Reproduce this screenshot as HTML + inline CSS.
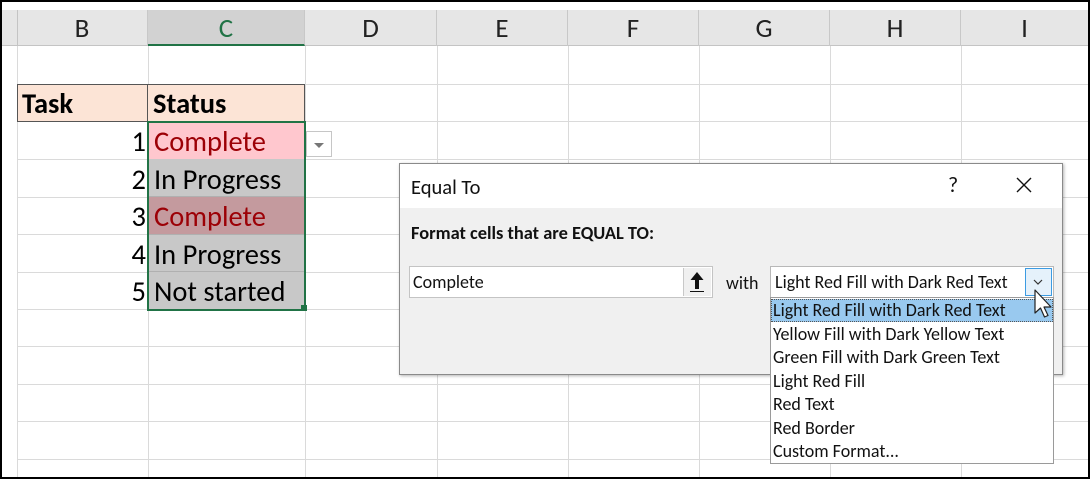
<!DOCTYPE html>
<html><head><meta charset="utf-8"><style>
*{margin:0;padding:0;box-sizing:border-box}
body{width:1090px;height:479px;overflow:hidden;background:#fff;font-family:Calibri,"Liberation Sans","DejaVu Sans",sans-serif;position:relative}
.a{position:absolute}
.hl{position:absolute;height:1px;background:#dadada;left:17px;right:2px}
.vl{position:absolute;width:1px;background:#dadada;top:46px;bottom:2px}
.ch{position:absolute;top:10px;height:36px;font-size:27px;line-height:38px;text-align:center;color:#222;border-right:1px solid #c8c8c8}
.cell{position:absolute;font-size:28.5px;line-height:37px;white-space:nowrap}
.num{position:absolute;left:17px;width:129px;text-align:right;font-size:28.5px;line-height:37px}
.opt{position:absolute;left:772px;width:280px;height:23px;font-size:18px;line-height:23px;padding-left:1px;color:#111;white-space:nowrap}
</style></head><body>
<div class="a" style="left:0;top:10px;width:1090px;height:36px;background:#e6e6e6;border-bottom:1px solid #c4c4c4"></div>
<div class="a" style="left:17px;top:10px;width:1px;height:36px;background:#c4c4c4"></div>
<div class="ch" style="left:17px;width:131px">B</div>
<div class="ch" style="left:148px;width:157px;background:#d2d2d2;color:#217346;border-bottom:2px solid #217346">C</div>
<div class="ch" style="left:305px;width:132px">D</div>
<div class="ch" style="left:437px;width:131px">E</div>
<div class="ch" style="left:568px;width:131px">F</div>
<div class="ch" style="left:699px;width:131px">G</div>
<div class="ch" style="left:830px;width:131px">H</div>
<div class="ch" style="left:961px;width:127px;border-right:none">I</div>

<div class="hl" style="top:84px"></div><div class="hl" style="top:121px"></div><div class="hl" style="top:159px"></div><div class="hl" style="top:197px"></div><div class="hl" style="top:234px"></div><div class="hl" style="top:272px"></div><div class="hl" style="top:309px"></div><div class="hl" style="top:346px"></div><div class="hl" style="top:384px"></div><div class="hl" style="top:421px"></div><div class="hl" style="top:459px"></div>
<div class="vl" style="left:17px"></div><div class="vl" style="left:148px"></div><div class="vl" style="left:305px"></div><div class="vl" style="left:437px"></div><div class="vl" style="left:568px"></div><div class="vl" style="left:699px"></div><div class="vl" style="left:830px"></div><div class="vl" style="left:961px"></div>

<div class="a" style="left:17px;top:84px;width:131px;height:38px;background:#fce4d6;border:1px solid #555"></div>
<div class="a" style="left:148px;top:84px;width:157px;height:38px;background:#fce4d6;border:1px solid #555;border-left:none"></div>
<div class="cell" style="left:22px;top:85px;font-weight:bold">Task</div>
<div class="cell" style="left:153px;top:85px;font-weight:bold">Status</div>

<div class="a" style="left:148px;top:121px;width:157px;height:38px;background:#ffc7ce"></div>
<div class="a" style="left:148px;top:159px;width:157px;height:38px;background:#c8c8c8"></div>
<div class="a" style="left:148px;top:197px;width:157px;height:37px;background:#c49a9e"></div>
<div class="a" style="left:148px;top:234px;width:157px;height:38px;background:#c8c8c8"></div>
<div class="a" style="left:148px;top:272px;width:157px;height:38px;background:#c8c8c8"></div>
<div class="a" style="left:148px;top:196px;width:157px;height:1px;background:#b0b0b0"></div>
<div class="a" style="left:148px;top:234px;width:157px;height:1px;background:#b0b0b0"></div>
<div class="a" style="left:148px;top:271px;width:157px;height:1px;background:#b0b0b0"></div>
<div class="a" style="left:147px;top:121px;width:159px;height:190px;border:2px solid #217346"></div>
<div class="a" style="left:301px;top:305px;width:6px;height:6px;background:#217346"></div>

<div class="num" style="top:123px">1</div><div class="cell" style="left:154px;top:123px;color:#9c0006">Complete</div>
<div class="num" style="top:161px">2</div><div class="cell" style="left:154px;top:161px">In Progress</div>
<div class="num" style="top:198px">3</div><div class="cell" style="left:154px;top:198px;color:#9c0006">Complete</div>
<div class="num" style="top:236px">4</div><div class="cell" style="left:154px;top:236px">In Progress</div>
<div class="num" style="top:273px">5</div><div class="cell" style="left:154px;top:273px">Not started</div>

<div class="a" style="left:306px;top:131px;width:26px;height:26px;background:#fff;border:1px solid #c6c6c6"></div>
<div class="a" style="left:314px;top:143px;width:0;height:0;border-left:5px solid transparent;border-right:5px solid transparent;border-top:5px solid #777"></div>

<!-- dialog -->
<div class="a" style="left:399px;top:163px;width:664px;height:212px;background:#f0f0f0;border:1px solid #8a8a8a;box-shadow:1px 1px 3px rgba(0,0,0,.3)"></div>
<div class="a" style="left:400px;top:164px;width:662px;height:44px;background:#fff"></div>
<div class="a" style="left:411px;top:174px;font-size:20.5px;line-height:26px;color:#111">Equal To</div>
<div class="a" style="left:948px;top:172px;font-size:22px;line-height:26px;color:#111">?</div>
<svg class="a" style="left:1016px;top:177px" width="16" height="16"><path d="M1 1L15 15M15 1L1 15" stroke="#111" stroke-width="1.4"/></svg>
<div class="a" style="left:411px;top:221px;font-size:18.4px;font-weight:bold;line-height:24px;color:#111">Format cells that are EQUAL TO:</div>
<div class="a" style="left:409px;top:266px;width:304px;height:32px;background:#fff;border:1px solid #c4c4c4"></div>
<div class="a" style="left:413px;top:271px;font-size:18px;line-height:23px;color:#111">Complete</div>
<div class="a" style="left:683px;top:268px;width:28px;height:28px;background:#f0f0f0;border-left:1px solid #c8c8c8"></div>
<svg class="a" style="left:685px;top:270px" width="24" height="24"><path d="M12 2L5.5 10H10V19H14V10H18.5Z" fill="#111"/><rect x="5" y="21" width="14" height="1" fill="#111"/></svg>
<div class="a" style="left:726px;top:272px;font-size:18px;line-height:23px;color:#111">with</div>
<div class="a" style="left:770px;top:266px;width:284px;height:32px;background:#fff;border:1px solid #b8b8b8"></div>
<div class="a" style="left:775px;top:271px;font-size:18px;line-height:23px;color:#111;white-space:nowrap">Light Red Fill with Dark Red Text</div>
<div class="a" style="left:1025px;top:268px;width:27px;height:28px;background:#e5f1fb;border:1px solid #3c9be2"></div>
<svg class="a" style="left:1032px;top:278px" width="12" height="8"><path d="M2 2L6 6L10 2" stroke="#333" stroke-width="1.2" fill="none"/></svg>

<div class="a" style="left:770px;top:297px;width:284px;height:167px;background:#fff;border:1px solid #9a9a9a"></div>
<div class="a" style="left:771px;top:299px;width:282px;height:23px;background:#99c9ef;border:1px dotted #555"></div>
<div class="opt" style="top:299px">Light Red Fill with Dark Red Text</div>
<div class="opt" style="top:323px">Yellow Fill with Dark Yellow Text</div>
<div class="opt" style="top:346px">Green Fill with Dark Green Text</div>
<div class="opt" style="top:370px">Light Red Fill</div>
<div class="opt" style="top:393px">Red Text</div>
<div class="opt" style="top:417px">Red Border</div>
<div class="opt" style="top:440px">Custom Format...</div>
<svg class="a" style="left:1033px;top:289px" width="22" height="32"><path d="M2 1V24L7.5 19L11.5 28L15 26.5L11 18H18Z" fill="#fff" stroke="#222" stroke-width="1.2" stroke-linejoin="round"/></svg>

<div class="a" style="left:0;top:0;width:1090px;height:479px;border:2px solid #000"></div>
</body></html>
